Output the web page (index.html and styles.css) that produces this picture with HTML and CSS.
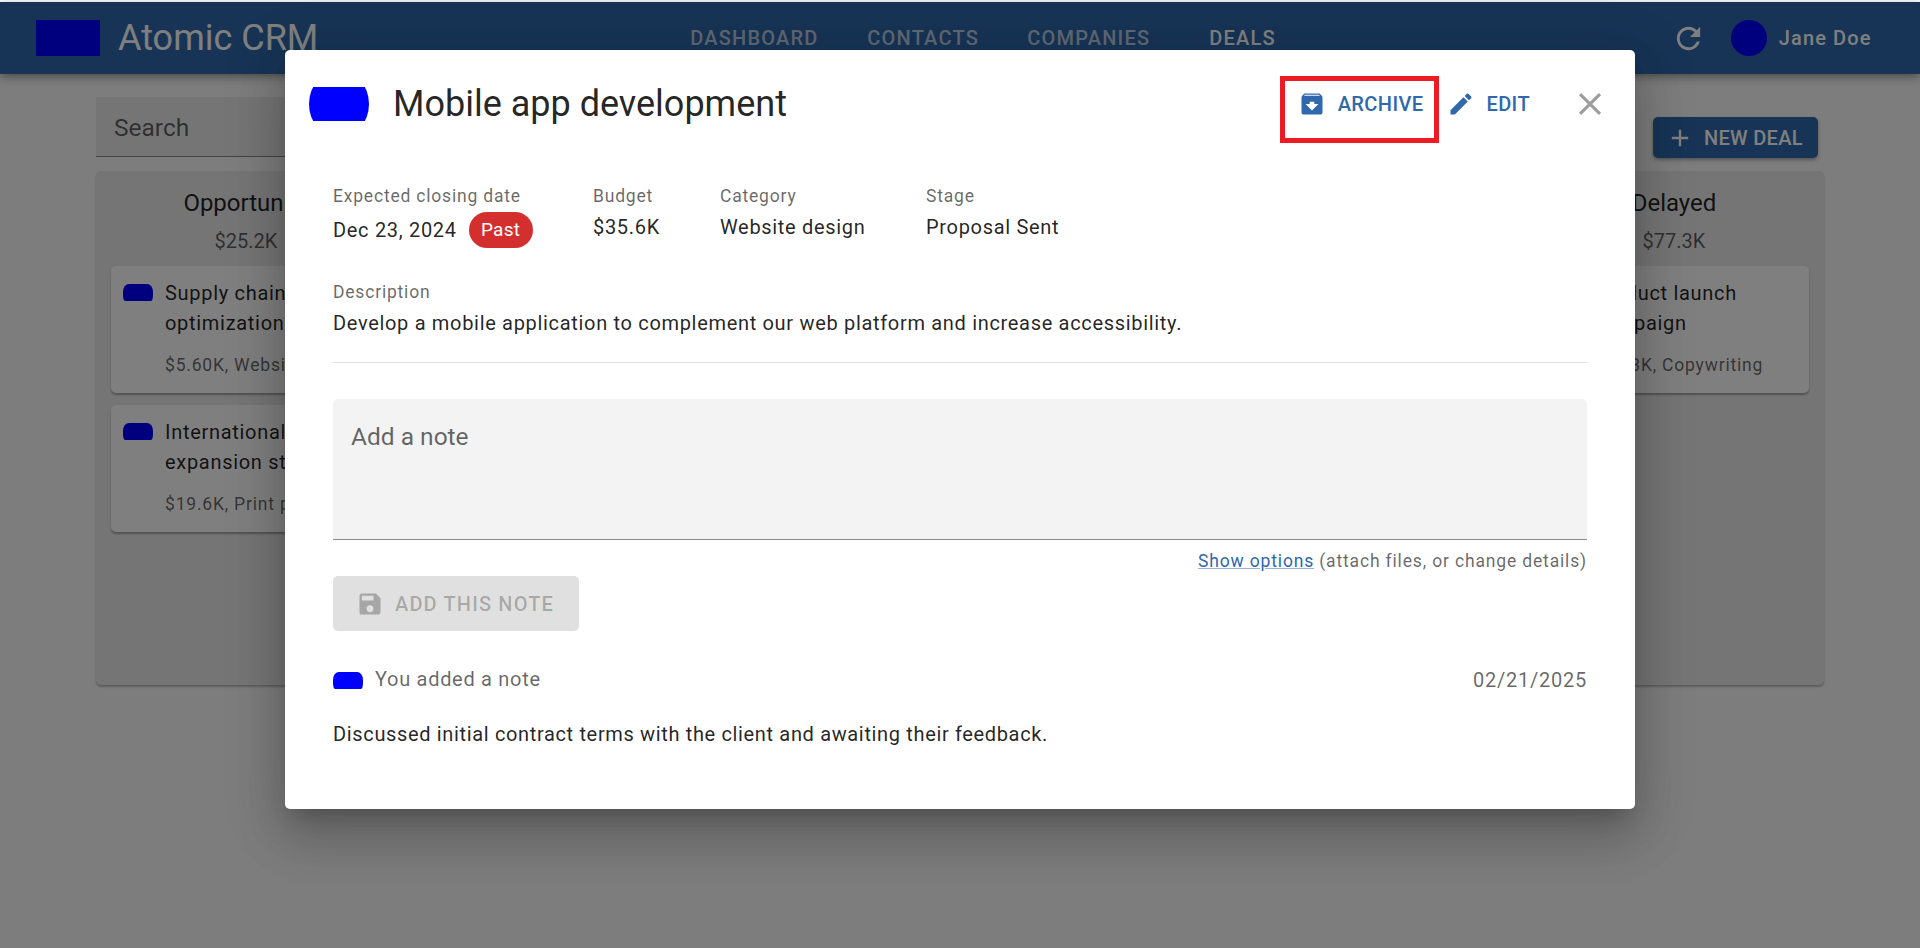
FILE: index.html
```html
<!DOCTYPE html>
<html lang="en">

<head>
    <meta charset="UTF-8">
    <meta name="viewport" content="width=device-width, initial-scale=1.0">
    <title>Atomic CRM</title>
    <link rel="stylesheet" href="styles.css">
</head>

<body>
    <header class="appbar">
        <div class="logo"></div>
        <span class="brand">Atomic CRM</span>
        <nav class="nav">
            <a class="nav-link nav-dashboard">DASHBOARD</a>
            <a class="nav-link nav-contacts">CONTACTS</a>
            <a class="nav-link nav-companies">COMPANIES</a>
            <a class="nav-link nav-active">DEALS</a>
        </nav>
        <svg class="refresh-icon" viewBox="0 0 24 24"><path d="M17.65 6.35C16.2 4.9 14.21 4 12 4c-4.42 0-7.99 3.58-7.99 8s3.57 8 7.99 8c3.73 0 6.84-2.55 7.73-6h-2.08c-.82 2.33-3.04 4-5.65 4-3.31 0-6-2.69-6-6s2.69-6 6-6c1.66 0 3.14.69 4.22 1.78L13 11h7V4l-2.35 2.35z"/></svg>
        <div class="user-avatar"></div>
        <span class="user-name">Jane Doe</span>
    </header>

    <main class="page">
        <div class="toolbar">
            <div class="search">Search</div>
            <button class="new-deal">
                <svg class="new-deal-icon" viewBox="0 0 24 24"><path d="M19 13h-6v6h-2v-6H5v-2h6V5h2v6h6v2z"/></svg>
                NEW DEAL
            </button>
        </div>

        <div class="board">
            <section class="column">
                <h3 class="column-title">Opportunity</h3>
                <p class="column-total">$25.2K</p>
                <article class="card">
                    <div class="avatar-small"></div>
                    <div>
                        <p class="card-title">Supply chain optimization</p>
                        <p class="card-meta">$5.60K, Website design</p>
                    </div>
                </article>
                <article class="card">
                    <div class="avatar-small"></div>
                    <div>
                        <p class="card-title">International expansion strategy</p>
                        <p class="card-meta">$19.6K, Print project</p>
                    </div>
                </article>
            </section>
            <section class="column">
                <h3 class="column-title">Delayed</h3>
                <p class="column-total">$77.3K</p>
                <article class="card">
                    <div class="avatar-small"></div>
                    <div>
                        <p class="card-title">Product launch campaign</p>
                        <p class="card-meta">$77.3K, Copywriting</p>
                    </div>
                </article>
            </section>
        </div>
    </main>

    <div class="backdrop">
        <div class="dialog">
            <div class="dialog-header">
                <div class="avatar-large"></div>
                <h2 class="dialog-title">Mobile app development</h2>
                <button class="text-btn archive-btn">
                    <svg class="btn-icon" viewBox="0 0 24 24"><path d="M20.54 5.23l-1.39-1.68C18.88 3.21 18.47 3 18 3H6c-.47 0-.88.21-1.16.55L3.46 5.23C3.17 5.57 3 6.02 3 6.5V19c0 1.1.9 2 2 2h14c1.1 0 2-.9 2-2V6.5c0-.48-.17-.93-.46-1.27zM12 17.5L6.5 12H10v-2h4v2h3.5L12 17.5zM5.12 5l.81-1h12l.94 1H5.12z"/></svg>
                    ARCHIVE
                </button>
                <button class="text-btn edit-btn">
                    <svg class="btn-icon" viewBox="0 0 24 24"><path d="M3 17.25V21h3.75L17.81 9.94l-3.75-3.75L3 17.25zM20.71 7.04c.39-.39.39-1.02 0-1.41l-2.34-2.34a.9959.9959 0 0 0-1.41 0l-1.83 1.83 3.75 3.75 1.83-1.83z"/></svg>
                    EDIT
                </button>
                <svg class="close-icon" viewBox="0 0 24 24"><path d="M19 6.41 17.59 5 12 10.59 6.41 5 5 6.41 10.59 12 5 17.59 6.41 19 12 13.41 17.59 19 19 17.59 13.41 12z"/></svg>
            </div>
            <div class="highlight"></div>

            <div class="dialog-body">
                <div class="fields">
                    <div class="field field-date">
                        <span class="label">Expected closing date</span>
                        <div class="date-row">
                            <span class="value">Dec 23, 2024</span>
                            <span class="chip">Past</span>
                        </div>
                    </div>
                    <div class="field field-budget">
                        <span class="label">Budget</span>
                        <span class="value">$35.6K</span>
                    </div>
                    <div class="field field-category">
                        <span class="label">Category</span>
                        <span class="value">Website design</span>
                    </div>
                    <div class="field">
                        <span class="label">Stage</span>
                        <span class="value">Proposal Sent</span>
                    </div>
                </div>

                <div class="description">
                    <span class="label">Description</span>
                    <span class="value">Develop a mobile application to complement our web platform and increase accessibility.</span>
                </div>

                <div class="note-input">Add a note</div>
                <p class="note-hint"><a class="note-link">Show options</a> (attach files, or change details)</p>
                <button class="add-note">
                    <svg class="add-note-icon" viewBox="0 0 24 24"><path d="M17 3H5c-1.11 0-2 .9-2 2v14c0 1.1.89 2 2 2h14c1.1 0 2-.9 2-2V7l-4-4zm-5 16c-1.66 0-3-1.34-3-3s1.34-3 3-3 3 1.34 3 3-1.34 3-3 3zm3-10H5V5h10v4z"/></svg>
                    ADD THIS NOTE
                </button>

                <div class="note-head">
                    <div class="avatar-small"></div>
                    <span class="note-author">You added a note</span>
                    <span class="note-date">02/21/2025</span>
                </div>
                <p class="note-text">Discussed initial contract terms with the client and awaiting their feedback.</p>
            </div>
        </div>
    </div>
</body>

</html>
```

FILE: styles.css
```css
* {
    box-sizing: border-box;
}

html,
body {
    height: 100%;
}

body {
    margin: 0;
    padding-top: 2px;
    font-family: Roboto, sans-serif;
    font-size: 20px;
    color: rgba(0, 0, 0, 0.87);
    background-color: #fafafa;
    overflow: hidden;
}

p,
h2,
h3 {
    margin: 0;
    font-weight: 400;
}

button {
    font-family: inherit;
    border: none;
    background: none;
    padding: 0;
}

/* top bar */
.appbar {
    display: flex;
    align-items: center;
    height: 72px;
    padding-left: 36px;
    background-color: #2f68ac;
    color: #fff;
    box-shadow: 0 3px 6px -1px rgba(0, 0, 0, 0.2), 0 5px 10px rgba(0, 0, 0, 0.14), 0 1px 12px rgba(0, 0, 0, 0.12);
}

.logo {
    width: 64px;
    height: 36px;
    background-color: #0000ff;
}

.brand {
    margin-left: 18px;
    font-size: 36px;
}

.nav {
    display: flex;
    margin-left: 372px;
}

.nav-link {
    font-size: 20px;
    font-weight: 500;
    letter-spacing: 1.2px;
    color: rgba(255, 255, 255, 0.7);
}

.nav-dashboard {
    width: 177px;
}

.nav-contacts {
    width: 160px;
}

.nav-companies {
    width: 182px;
}

.nav-active {
    color: #fff;
}

.refresh-icon {
    width: 35px;
    height: 35px;
    margin-left: 395px;
    fill: #fff;
}

.user-avatar {
    width: 36px;
    height: 36px;
    margin-left: 25px;
    border-radius: 50%;
    background-color: #0000ff;
}

.user-name {
    margin-left: 12px;
    font-weight: 500;
    letter-spacing: 1.1px;
}

/* deals page behind the dialog */
.page {
    padding: 23px 96px 0;
}

.toolbar {
    display: flex;
    justify-content: space-between;
    align-items: flex-start;
    padding-right: 6px;
}

.search {
    width: 320px;
    height: 60px;
    padding: 16px 18px;
    font-size: 24.5px;
    color: rgba(0, 0, 0, 0.6);
    background-color: rgba(0, 0, 0, 0.06);
    border-bottom: 1px solid rgba(0, 0, 0, 0.42);
}

.new-deal {
    display: flex;
    align-items: center;
    gap: 10px;
    width: 165px;
    height: 41px;
    padding-left: 13px;
    margin-top: 20px;
    font-size: 20px;
    font-weight: 500;
    letter-spacing: 0.3px;
    color: #fff;
    background-color: #2f68ac;
    border-radius: 5px;
    box-shadow: 0 2px 3px rgba(0, 0, 0, 0.2), 0 2px 5px rgba(0, 0, 0, 0.14);
}

.new-deal-icon {
    width: 28px;
    height: 28px;
    fill: #fff;
}

.board {
    display: flex;
    justify-content: space-between;
    height: 514px;
    margin-top: 13px;
    padding: 0 15px;
    background-color: #eaeaea;
    border-radius: 5px;
    box-shadow: 0 2px 2px rgba(0, 0, 0, 0.25);
}

.column {
    width: 270px;
}

.column-title {
    margin-top: 16px;
    font-size: 24px;
    line-height: 32px;
    text-align: center;
}

.column-total {
    margin-top: 7px;
    line-height: 30px;
    font-size: 20px;
    text-align: center;
    color: rgba(0, 0, 0, 0.6);
}

.card {
    display: flex;
    gap: 12px;
    height: 127px;
    margin-top: 12px;
    padding: 12px 12px 0;
    background-color: #fff;
    border-radius: 5px;
    box-shadow: 0 2px 2px rgba(0, 0, 0, 0.3);
}

.column-total + .card {
    margin-top: 10px;
}

.card-title {
    font-size: 20px;
    line-height: 30px;
    letter-spacing: 0.7px;
}

.card-meta {
    margin-top: 14px;
    font-size: 17.5px;
    line-height: 26px;
    letter-spacing: 0.8px;
    color: rgba(0, 0, 0, 0.6);
}

.avatar-small {
    flex-shrink: 0;
    width: 30px;
    height: 17px;
    margin-top: 6px;
    background-color: #0000ff;
    border-radius: 6px 6px 2px 2px / 8px 8px 6px 6px;
}

/* dialog */
.backdrop {
    position: absolute;
    top: 2px;
    left: 0;
    right: 0;
    bottom: 0;
    background-color: rgba(0, 0, 0, 0.5);
}

.dialog {
    position: relative;
    width: 1350px;
    height: 759px;
    margin: 48px auto 0;
    background-color: #fff;
    border-radius: 5px;
    box-shadow: 0 14px 19px -9px rgba(0, 0, 0, 0.2), 0 30px 48px 4px rgba(0, 0, 0, 0.14), 0 11px 58px 10px rgba(0, 0, 0, 0.12);
}

.dialog-header {
    display: flex;
    align-items: center;
    height: 108px;
    padding-left: 24px;
}

.avatar-large {
    width: 60px;
    height: 34px;
    background-color: #0000ff;
    clip-path: ellipse(50% 100% at 50% 50%);
}

.dialog-title {
    flex: 1;
    margin-left: 24px;
    font-size: 36px;
}

.text-btn {
    display: flex;
    align-items: center;
    font-size: 20px;
    font-weight: 500;
    letter-spacing: 0.4px;
    color: #2f68ac;
}

.btn-icon {
    width: 28px;
    height: 28px;
    fill: #2f68ac;
}

.archive-btn {
    gap: 12px;
    margin-right: 24px;
}

.edit-btn {
    gap: 11px;
}

.close-icon {
    width: 38px;
    height: 38px;
    margin: 0 26px 0 41px;
    fill: #9e9e9e;
}

.highlight {
    position: absolute;
    top: 26px;
    left: 995px;
    width: 159px;
    height: 67px;
    border: 5px solid #ed1c24;
}

.dialog-body {
    padding: 0 48px;
}

.fields {
    display: flex;
    margin-top: 27px;
}

.field {
    display: flex;
    flex-direction: column;
    gap: 4px;
}

.field-date {
    width: 260px;
}

.field-budget {
    width: 127px;
}

.field-category {
    width: 206px;
}

.label {
    font-size: 17.5px;
    line-height: 23px;
    letter-spacing: 0.8px;
    color: rgba(0, 0, 0, 0.6);
}

.value {
    font-size: 20px;
    line-height: 30px;
    letter-spacing: 0.68px;
}

.date-row {
    display: flex;
    align-items: center;
    gap: 12px;
}

.chip {
    width: 64px;
    height: 36px;
    font-size: 19px;
    line-height: 36px;
    letter-spacing: 0.3px;
    text-align: center;
    color: #fff;
    background-color: #d32f2f;
    border-radius: 18px;
}

.description {
    display: flex;
    flex-direction: column;
    gap: 4px;
    height: 82px;
    margin-top: 33px;
    border-bottom: 1px solid #e0e0e0;
}

.note-input {
    height: 141px;
    margin-top: 36px;
    padding: 23px 18px;
    font-size: 24.5px;
    color: rgba(0, 0, 0, 0.6);
    background-color: #f3f3f3;
    border-bottom: 1px solid #8a8a8a;
    border-radius: 5px 5px 0 0;
}

.note-hint {
    margin-top: 8px;
    font-size: 17.5px;
    line-height: 26px;
    letter-spacing: 0.84px;
    text-align: right;
    color: rgba(0, 0, 0, 0.6);
}

.note-link {
    color: #2f68ac;
    text-decoration: underline;
    text-decoration-color: rgba(47, 104, 172, 0.5);
}

.add-note {
    display: flex;
    align-items: center;
    gap: 11px;
    width: 246px;
    height: 55px;
    margin-top: 2px;
    padding-left: 23px;
    font-size: 20px;
    font-weight: 500;
    letter-spacing: 1.15px;
    color: rgba(0, 0, 0, 0.26);
    background-color: #e0e0e0;
    border-radius: 5px;
}

.add-note-icon {
    width: 28px;
    height: 28px;
    fill: rgba(0, 0, 0, 0.26);
}

.note-head {
    display: flex;
    align-items: center;
    margin-top: 36px;
}

.note-head .avatar-small {
    margin-top: 0;
}

.note-author {
    flex: 1;
    margin-left: 12px;
    margin-bottom: 2px;
    letter-spacing: 0.7px;
    color: rgba(0, 0, 0, 0.6);
}

.note-date {
    letter-spacing: 0.75px;
    color: rgba(0, 0, 0, 0.6);
}

.note-text {
    margin-top: 26px;
    line-height: 30px;
    letter-spacing: 0.65px;
}
```
